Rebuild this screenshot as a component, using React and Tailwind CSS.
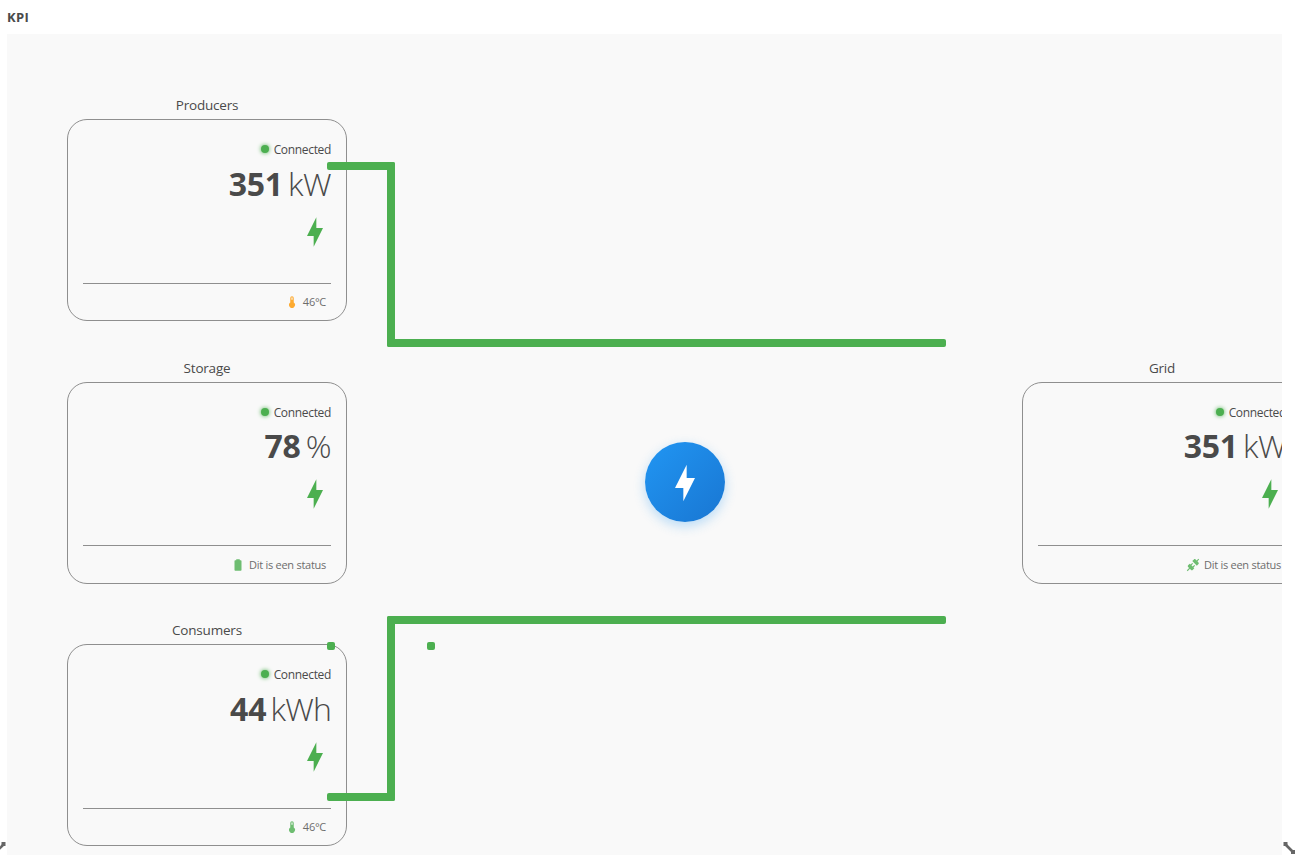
const FLASH = 'M11 15H6L13 1V9H18L11 23V15Z';
const THERMOMETER =
  'M15 13V5A3 3 0 0 0 9 5V13A5 5 0 1 0 15 13M12 4A1 1 0 0 1 13 5V8H11V5A1 1 0 0 1 12 4Z';
const BATTERY =
  'M16.67 4H15V2H9V4H7.33A1.33 1.33 0 0 0 6 5.33V20.67C6 21.4 6.6 22 7.33 22H16.67A1.33 1.33 0 0 0 18 20.67V5.33C18 4.6 17.4 4 16.67 4Z';
const PLUG =
  'M21.4 7.5C22.2 8.3 22.2 9.6 21.4 10.3L18.6 13.1L10.8 5.3L13.6 2.5C14.4 1.7 15.7 1.7 16.4 2.5L18.2 4.3L21.2 1.3L22.6 2.7L19.6 5.7L21.4 7.5M15.6 13.3L14.2 11.9L11.4 14.7L9.3 12.6L12.1 9.8L10.7 8.4L7.9 11.2L6.4 9.8L3.6 12.6C2.8 13.4 2.8 14.7 3.6 15.4L5.4 17.2L1.4 21.2L2.8 22.6L6.8 18.6L8.6 20.4C9.4 21.2 10.7 21.2 11.4 20.4L14.2 17.6L12.8 16.2L15.6 13.3Z';

function Icon({ path, className }) {
  return (
    <svg viewBox="0 0 24 24" fill="currentColor" className={className}>
      <path d={path} />
    </svg>
  );
}

const UPPER = { value: 'h-3', flash: 'h-[94px] pt-[26px]', footer: 'h-[35px]' };
const MIDDLE = { value: 'h-[10px]', flash: 'h-[95px] pt-[27px]', footer: 'h-[37px]' };

function Node({ title, value, unit, icon, iconColor, status, place, rows, valueClass, unitClass }) {
  return (
    <section className={`absolute w-[280px] ${place}`}>
      <h2 className="flex h-[29px] items-center justify-center pt-[3px] text-[13.5px] leading-none tracking-[-0.2px]">{title}</h2>
      <div className="flex h-[202px] flex-col rounded-[20px] border border-[#8f8f8f] px-[15px]">
        <div className="flex h-[58px] items-center justify-end gap-[5px]">
          <span className="size-2 rounded-full bg-[#4caf50] shadow-[0_0_4px_#4caf50]" />
          <span className="mt-px text-[12px] leading-none tracking-[-0.33px]">Connected</span>
        </div>
        <div className={`flex items-center justify-end gap-[5px] whitespace-nowrap ${rows.value}`}>
          <span className={`text-[32px] font-bold leading-none ${valueClass}`}>{value}</span>
          <span className={`text-[32px] font-light leading-none ${unitClass}`}>{unit}</span>
        </div>
        <div className={`flex items-start justify-end border-b border-[#8f8f8f] ${rows.flash}`}>
          <Icon path={FLASH} className="size-8 text-[#4caf50]" />
        </div>
        <div className={`flex items-center justify-end gap-1 pr-[5px] opacity-80 ${rows.footer}`}>
          <Icon path={icon} className={`size-[14px] ${iconColor}`} />
          <span className="text-[11px] leading-none tracking-[-0.27px]">{status}</span>
        </div>
      </div>
    </section>
  );
}

function Pipe({ place }) {
  return <div className={`absolute rounded-[2px] bg-[#4caf50] ${place}`} />;
}

function Grip({ className }) {
  return (
    <svg viewBox="0 0 14 14" className={className}>
      <path d="M3 3L11 11" stroke="#666" strokeWidth="2.6" />
      <path d="M1.5 1H5.5V5H1.5ZM9 9H13V13H9Z" fill="#666" />
    </svg>
  );
}

export default function App() {
  return (
    <main className="relative flex h-[855px] w-[1295px] flex-col overflow-hidden bg-white pl-[7px] pr-[13px] font-['Open_Sans','Noto_Sans',sans-serif] text-[#4a4a4a]">
      <header className="flex h-[34px] items-center pt-px text-[13px] font-bold tracking-[0.3px]">KPI</header>
      <div className="relative flex-1 overflow-hidden bg-[#f9f9f9]">
        <Node place="left-[60px] top-[56px]" rows={UPPER} title="Producers" value="351" unit="kW" icon={THERMOMETER} iconColor="text-[#ff9800]" status="46°C" valueClass="tracking-[-0.2px]" unitClass="tracking-[-0.5px]" />
        <Node place="left-[60px] top-[319px]" rows={MIDDLE} title="Storage" value="78" unit="%" icon={BATTERY} iconColor="text-[#4caf50]" status="Dit is een status" valueClass="tracking-[-0.2px]" unitClass="tracking-[-0.5px]" />
        <Node place="left-[60px] top-[581px]" rows={UPPER} title="Consumers" value="44" unit="kWh" icon={THERMOMETER} iconColor="text-[#4caf50]" status="46°C" valueClass="-mr-px" unitClass="tracking-[-0.8px]" />
        <Node place="left-[1015px] top-[319px]" rows={MIDDLE} title="Grid" value="351" unit="kW" icon={PLUG} iconColor="text-[#4caf50]" status="Dit is een status" valueClass="tracking-[-0.2px]" unitClass="tracking-[-0.5px]" />

        <Pipe place="left-[320px] top-[128px] h-2 w-[68px]" />
        <Pipe place="left-[380px] top-[128px] h-[185px] w-2" />
        <Pipe place="left-[380px] top-[305px] h-2 w-[559px]" />
        <Pipe place="left-[380px] top-[582px] h-2 w-[559px]" />
        <Pipe place="left-[380px] top-[582px] h-[185px] w-2" />
        <Pipe place="left-[320px] top-[759px] h-2 w-[68px]" />
        <Pipe place="left-[320px] top-[608px] size-2" />
        <Pipe place="left-[420px] top-[608px] size-2" />

        <div className="absolute left-[638px] top-[408px] flex size-20 items-center justify-center rounded-full bg-linear-135 from-[#2196f3] to-[#1976d2] pt-px text-white shadow-[0_4px_12px_rgba(33,150,243,0.3)]">
          <Icon path={FLASH} className="size-10" />
        </div>
      </div>
      <Grip className="absolute left-[-7px] top-[841px] size-[14px] -scale-x-100" />
      <Grip className="absolute left-[1282px] top-[841px] size-[14px]" />
    </main>
  );
}
